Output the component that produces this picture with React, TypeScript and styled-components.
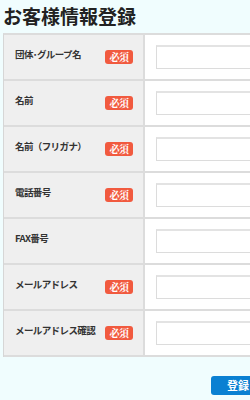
import React from "react";
import styled, { createGlobalStyle } from "styled-components";

const Global = createGlobalStyle`
  html, body { margin: 0; padding: 0; }
  body {
    background: #f0fdfe;
    font-family: "Noto Sans CJK JP", "Noto Sans", sans-serif;
    color: #333;
    overflow: hidden;
  }
`;

const Page = styled.div`
  width: 250px;
  height: 400px;
  padding: 0 0 0 3px;
  box-sizing: border-box;
  overflow: hidden;
`;

const Title = styled.h1`
  margin: 0;
  height: 33px;
  font-size: 19px;
  line-height: 31px;
  font-weight: 700;
  color: #222;
  white-space: nowrap;
`;

const Table = styled.div`
  width: 300px;
  border-top: 2px solid #dcdcdc;
  border-left: 1px solid #d6d6d6;
`;

const Row = styled.div`
  display: grid;
  grid-template-columns: 141px 1fr;
  height: 46px;
  border-bottom: 2px solid #dcdcdc;
  box-sizing: border-box;
`;

const Label = styled.div`
  background: #efefef;
  border-right: 2px solid #dcdcdc;
  display: flex;
  align-items: center;
  justify-content: space-between;
  padding: 0 10px 0 11px;
`;

const LabelText = styled.span`
  font-size: 9.5px;
  font-weight: 700;
  color: #333;
  margin-top: -7px;
  white-space: nowrap;
  letter-spacing: -0.6px;
`;

const Badge = styled.span`
  background: #f15a3f;
  color: #fff;
  font-family: "Noto Serif CJK JP", "Noto Sans CJK JP", serif;
  font-size: 10px;
  font-weight: 700;
  line-height: 14px;
  height: 14px;
  width: 28px;
  text-align: center;
  border-radius: 3px;
  flex: none;
  letter-spacing: -0.5px;
`;

const Field = styled.div`
  background: #fff;
  display: flex;
  align-items: center;
  padding-left: 11px;
`;

const Input = styled.div`
  width: 200px;
  height: 21px;
  background: #fff;
  border: 1px solid #dcdcdc;
  border-top: 2px solid #e3e3e3;
`;

const Footer = styled.div`
  display: flex;
  justify-content: flex-start;
  padding: 19px 0 0 208px;
`;

const Button = styled.div`
  background: #0a80d2;
  color: #fff;
  font-size: 11px;
  font-weight: 700;
  height: 19px;
  line-height: 19px;
  width: 60px;
  border-radius: 3px;
  padding-left: 16px;
  flex: none;
`;

const rows: [string, boolean][] = [
  ["団体･グループ名", true],
  ["名前", true],
  ["名前（フリガナ）", true],
  ["電話番号", true],
  ["FAX番号", false],
  ["メールアドレス", true],
  ["メールアドレス確認", true],
];

export default function App() {
  return (
    <Page>
      <Global />
      <Title>お客様情報登録</Title>
      <Table>
        {rows.map(([label, req]) => (
          <Row key={label}>
            <Label>
              <LabelText>{label}</LabelText>
              {req && <Badge>必須</Badge>}
            </Label>
            <Field>
              <Input />
            </Field>
          </Row>
        ))}
      </Table>
      <Footer>
        <Button>登録</Button>
      </Footer>
    </Page>
  );
}
